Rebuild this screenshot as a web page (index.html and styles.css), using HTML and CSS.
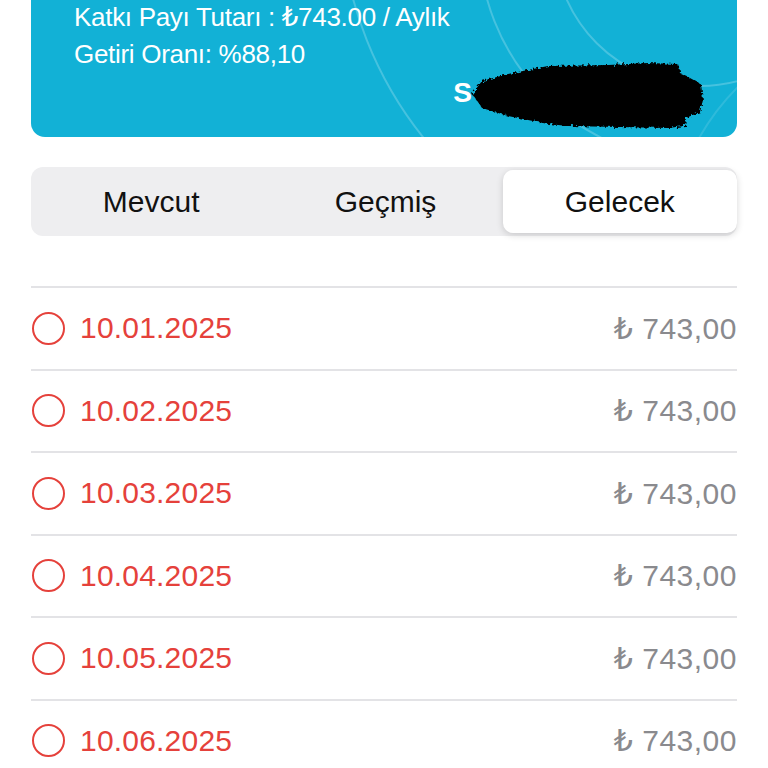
FILE: index.html
```html
<!DOCTYPE html>
<html lang="tr">
<head>
    <meta charset="UTF-8">
    <meta name="viewport" content="width=device-width, initial-scale=1.0">
    <title>Katkı Payı Takvimi</title>
    <link rel="stylesheet" href="styles.css">
</head>
<body>
    <div class="page">
        <div class="plan-card">
            <svg class="plan-rings" width="706" height="177" viewBox="0 0 706 177" aria-hidden="true">
                <g fill="none" stroke="rgba(255,255,255,0.22)" stroke-width="2">
                    <circle cx="689" cy="-60" r="380"/>
                    <circle cx="669" cy="-20" r="221"/>
                    <circle cx="669" cy="-20" r="146"/>
                </g>
                <circle cx="869" cy="290" r="230" fill="none" stroke="rgba(255,255,255,0.12)" stroke-width="2"/>
            </svg>
            <p class="plan-line">Katkı Payı Tutarı : ₺743.00 / Aylık</p>
            <p class="plan-line">Getiri Oranı: %88,10</p>
            <div class="holder">
                <span class="holder-name">S</span>
                <svg class="redact" width="240" height="74" viewBox="0 0 240 74" aria-hidden="true">
                    <defs>
                        <filter id="rough" x="-5%" y="-10%" width="110%" height="120%">
                            <feTurbulence type="fractalNoise" baseFrequency="0.35" numOctaves="2" seed="4"/>
                            <feDisplacementMap in="SourceGraphic" scale="6"/>
                        </filter>
                    </defs>
                    <path fill="#000" filter="url(#rough)" d="M4 36 L14 23 L40 16 L80 8 L140 7 L180 5 L210 6 L213 16 L222 20 L233 26 L235 42 L232 54 L218 60 L217 68 L200 70 L150 69 L100 68 L80 66 L40 58 L14 50 Z"/>
                </svg>
            </div>
        </div>

        <div class="segment">
            <div class="segment-item">Mevcut</div>
            <div class="segment-item">Geçmiş</div>
            <div class="segment-item is-active">Gelecek</div>
        </div>

        <ul class="payment-list">
            <li class="payment-row">
                <span class="status-ring"></span>
                <span class="payment-date">10.01.2025</span>
                <span class="payment-amount">₺ 743,00</span>
            </li>
            <li class="payment-row">
                <span class="status-ring"></span>
                <span class="payment-date">10.02.2025</span>
                <span class="payment-amount">₺ 743,00</span>
            </li>
            <li class="payment-row">
                <span class="status-ring"></span>
                <span class="payment-date">10.03.2025</span>
                <span class="payment-amount">₺ 743,00</span>
            </li>
            <li class="payment-row">
                <span class="status-ring"></span>
                <span class="payment-date">10.04.2025</span>
                <span class="payment-amount">₺ 743,00</span>
            </li>
            <li class="payment-row">
                <span class="status-ring"></span>
                <span class="payment-date">10.05.2025</span>
                <span class="payment-amount">₺ 743,00</span>
            </li>
            <li class="payment-row">
                <span class="status-ring"></span>
                <span class="payment-date">10.06.2025</span>
                <span class="payment-amount">₺ 743,00</span>
            </li>
        </ul>
    </div>
</body>
</html>
```

FILE: styles.css
```css
body {
    font-family: 'Liberation Sans', Arial, 'DejaVu Sans', sans-serif;
    background-color: #ffffff;
    margin: 0;
    overflow: hidden;
}
.page {
    padding: 0 31px;
}

/* plan card */
.plan-card {
    position: relative;
    overflow: hidden;
    height: 177px;
    margin-top: -40px;
    padding: 39px 0 0 43px;
    box-sizing: border-box;
    background-color: #12b1d6;
    border-radius: 14px;
    color: #ffffff;
}
.plan-rings {
    position: absolute;
    top: 0;
    left: 0;
}
.plan-line {
    position: relative;
    margin: 0;
    font-size: 26px;
    line-height: 37px;
    letter-spacing: -0.3px;
}
.holder {
    position: relative;
    display: flex;
    align-items: center;
    justify-content: flex-end;
    padding-right: 29px;
    margin-top: -15px;
}
.holder-name {
    font-size: 28px;
    font-weight: bold;
    margin-right: -4px;
    margin-top: -4px;
}
.redact {
    display: block;
}

/* segmented control */
.segment {
    display: grid;
    grid-template-columns: repeat(3, 1fr);
    height: 69px;
    margin-top: 30px;
    padding: 3px 0 3px 3px;
    box-sizing: border-box;
    background-color: #eeeef0;
    border-radius: 12px;
}
.segment-item {
    display: flex;
    align-items: center;
    justify-content: center;
    font-size: 30px;
    color: #111111;
    border-radius: 10px;
}
.segment-item.is-active {
    background-color: #ffffff;
    box-shadow: 0 2px 7px rgba(0, 0, 0, 0.16);
}

/* payment list */
.payment-list {
    list-style: none;
    margin: 50px 0 0 0;
    padding: 0;
}
.payment-row {
    display: flex;
    align-items: center;
    height: 80.5px;
    border-top: 2px solid #e3e3e6;
}
.status-ring {
    width: 29px;
    height: 29px;
    margin-left: 1px;
    border: 2px solid #e5413b;
    border-radius: 50%;
    flex-shrink: 0;
}
.payment-date {
    margin-left: 15px;
    font-size: 30px;
    color: #e5413b;
    letter-spacing: 0.2px;
}
.payment-amount {
    margin-left: auto;
    font-size: 30px;
    color: #8a8a8e;
    letter-spacing: 0.5px;
}
```
